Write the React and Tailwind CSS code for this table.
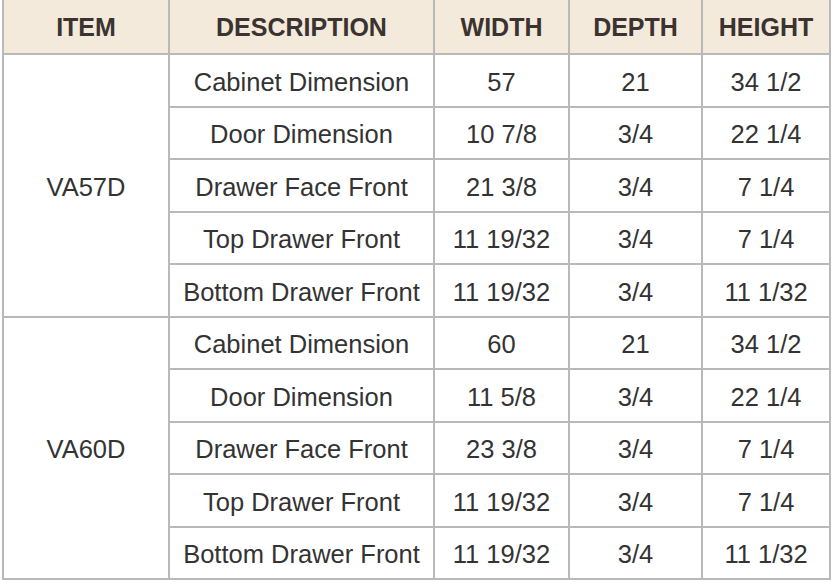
import React from 'react';

const groups = [
    {
        item: 'VA57D',
        rows: [
            ['Cabinet Dimension', '57', '21', '34 1/2'],
            ['Door Dimension', '10 7/8', '3/4', '22 1/4'],
            ['Drawer Face Front', '21 3/8', '3/4', '7 1/4'],
            ['Top Drawer Front', '11 19/32', '3/4', '7 1/4'],
            ['Bottom Drawer Front', '11 19/32', '3/4', '11 1/32'],
        ],
    },
    {
        item: 'VA60D',
        rows: [
            ['Cabinet Dimension', '60', '21', '34 1/2'],
            ['Door Dimension', '11 5/8', '3/4', '22 1/4'],
            ['Drawer Face Front', '23 3/8', '3/4', '7 1/4'],
            ['Top Drawer Front', '11 19/32', '3/4', '7 1/4'],
            ['Bottom Drawer Front', '11 19/32', '3/4', '11 1/32'],
        ],
    },
];

const headers = ['ITEM', 'DESCRIPTION', 'WIDTH', 'DEPTH', 'HEIGHT'];

const App = () => {
    return (
        <div className="w-[832px] h-[582px] bg-white overflow-hidden" style={{ fontFamily: '"Liberation Sans", Arial, sans-serif' }}>
            <table className="ml-[2px] w-[827px] border-collapse table-fixed text-[25.5px] text-[#333333]">
                <colgroup>
                    <col className="w-[166px]" />
                    <col className="w-[265px]" />
                    <col className="w-[135px]" />
                    <col className="w-[133px]" />
                    <col className="w-[128px]" />
                </colgroup>
                <thead>
                    <tr className="h-[54px] bg-[#f3eadc]">
                        {headers.map((h) => (
                            <th key={h} className="border-2 border-t-0 border-[#b9b9b9] pt-[2px] text-[25px] font-bold text-[#3a3330] text-center align-middle">
                                {h}
                            </th>
                        ))}
                    </tr>
                </thead>
                <tbody>
                    {groups.map((g) =>
                        g.rows.map((r, i) => (
                            <tr key={g.item + i} className="h-[52.5px]">
                                {i === 0 && (
                                    <td rowSpan={5} className="border-2 border-[#b9b9b9] pt-[3px] text-center align-middle">
                                        {g.item}
                                    </td>
                                )}
                                {r.map((c, j) => (
                                    <td key={j} className="border-2 border-[#b9b9b9] pt-[3px] text-center align-middle whitespace-nowrap">
                                        {c}
                                    </td>
                                ))}
                            </tr>
                        ))
                    )}
                </tbody>
            </table>
        </div>
    );
};

export default App;
